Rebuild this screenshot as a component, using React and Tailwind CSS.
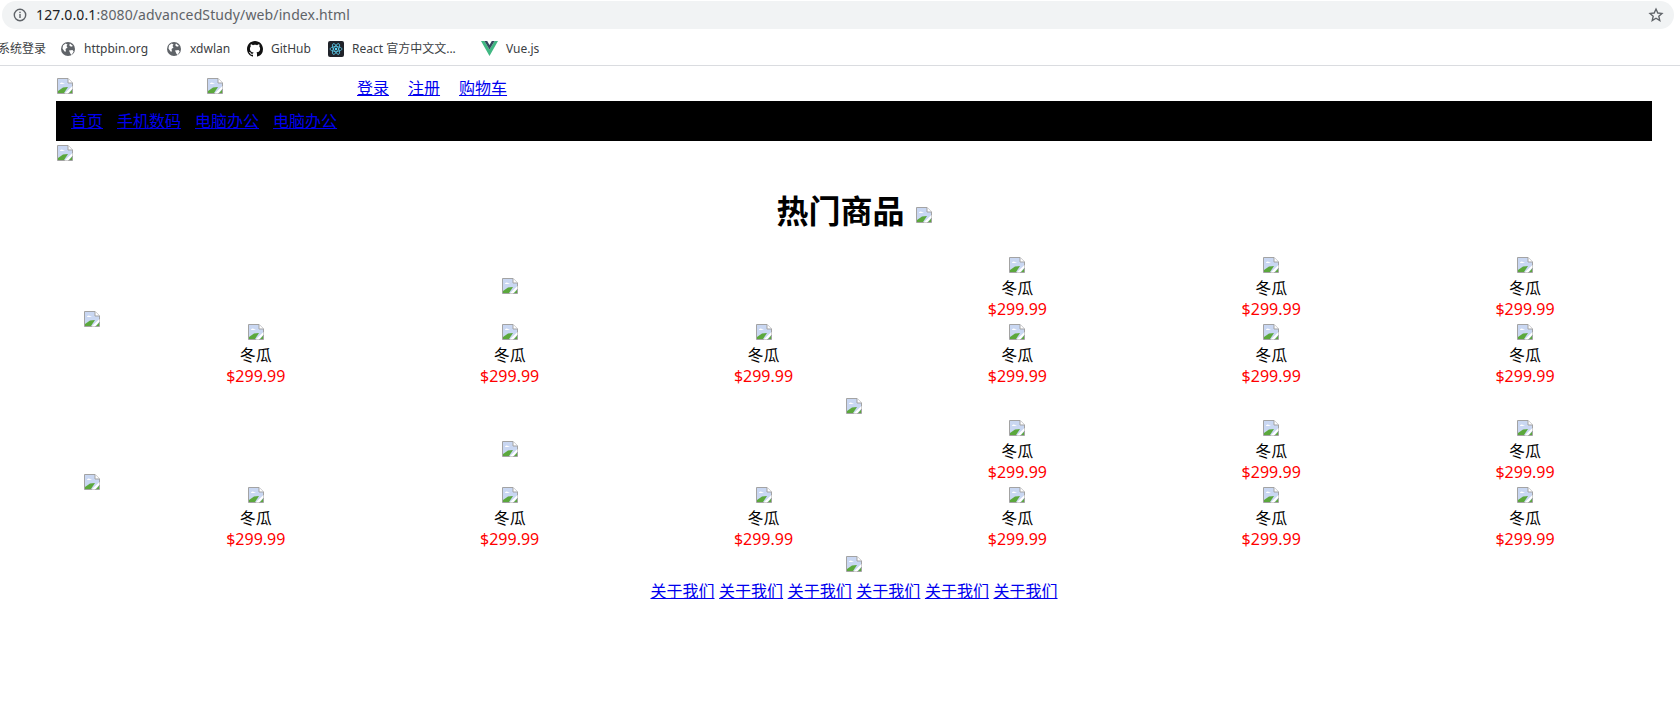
import React from "react";

const Broken = () => (
  <svg width="16" height="16" viewBox="0 0 16 16" className="block shrink-0">
    <path d="M0.5 0.5H11L15.5 5V15.5H0.5Z" fill="#c9d7f2" stroke="#a3a3a3" />
    <path d="M11 0.5V5H15.5" fill="#fff" stroke="#a3a3a3" />
    <path d="M3 5.5c1-1.2 2.4-1.2 3.2-.3.9 0 1.4.4 1.5.9H3z" fill="#fff" />
    <path d="M1 15V13L6 9.5 11 9 7 15Z" fill="#5ba83c" />
    <path d="M7.5 15.5L15.5 8V10.5L11 15.5Z" fill="#fff" />
    <path d="M12 15L15 11.7V15Z" fill="#5ba83c" />
  </svg>
);

const Globe = () => (
  <svg width="16" height="16" viewBox="0 0 16 16" className="shrink-0">
    <circle cx="8" cy="8" r="7" fill="#5f6368" />
    <path d="M3 4.5l2.5-2 2 1-1 1.5 1 1.5-2 1.5.5 2.5-1.5 0-2-3zM9 9.5l3.5-.5 1.2 1.5-2.2 3.5-1.2-1.5zM10 2.5l3 2.5-2 .8-1.8-1.5z" fill="#fff" />
  </svg>
);

const Github = () => (
  <svg width="16" height="16" viewBox="0 0 16 16" className="shrink-0" fill="#111">
    <path d="M8 0C3.58 0 0 3.58 0 8c0 3.54 2.29 6.53 5.47 7.59.4.07.55-.17.55-.38 0-.19-.01-.82-.01-1.49-2.01.37-2.53-.49-2.69-.94-.09-.23-.48-.94-.82-1.13-.28-.15-.68-.52-.01-.53.63-.01 1.08.58 1.23.82.72 1.21 1.87.87 2.33.66.07-.52.28-.87.51-1.07-1.78-.2-3.64-.89-3.64-3.95 0-.87.31-1.59.82-2.15-.08-.2-.36-1.02.08-2.12 0 0 .67-.21 2.2.82.64-.18 1.32-.27 2-.27s1.36.09 2 .27c1.53-1.04 2.2-.82 2.2-.82.44 1.1.16 1.92.08 2.12.51.56.82 1.27.82 2.15 0 3.07-1.87 3.75-3.65 3.95.29.25.54.73.54 1.48 0 1.07-.01 1.93-.01 2.2 0 .21.15.46.55.38A8.01 8.01 0 0 0 16 8c0-4.42-3.58-8-8-8z" />
  </svg>
);

const ReactIcon = () => (
  <svg width="16" height="16" viewBox="0 0 16 16" className="shrink-0">
    <rect width="16" height="16" rx="2" fill="#20232a" />
    <g fill="none" stroke="#61dafb" strokeWidth="0.7">
      <ellipse cx="8" cy="8" rx="6" ry="2.4" />
      <ellipse cx="8" cy="8" rx="6" ry="2.4" transform="rotate(60 8 8)" />
      <ellipse cx="8" cy="8" rx="6" ry="2.4" transform="rotate(120 8 8)" />
    </g>
    <circle cx="8" cy="8" r="1.2" fill="#61dafb" />
  </svg>
);

const Vue = () => (
  <svg width="17" height="15" viewBox="0 0 17 15" className="shrink-0">
    <path d="M0 0H3.4L8.5 8.6 13.6 0H17L8.5 15Z" fill="#41b883" />
    <path d="M3.4 0H6.2L8.5 4 10.8 0H13.6L8.5 8.6Z" fill="#35495e" />
  </svg>
);

const Bookmark = ({ icon, label, className }) => (
  <div className={`flex items-center ${className}`}>
    {icon}
    <span className="ml-[8px] whitespace-nowrap text-[12px] text-[#3c4043]">{label}</span>
  </div>
);

const Item = () => (
  <div className="flex flex-col items-center h-[67px]">
    <div className="h-[21px]"><Broken /></div>
    <div className="h-[21px] leading-[20px] text-black">冬瓜</div>
    <div className="h-[25px] leading-[20px] text-[#ff0000]">$299.99</div>
  </div>
);

const Hot = () => (
  <div className="flex items-start">
    <div className="w-[73px] pl-[28px] flex items-center h-[124px]">
      <Broken />
    </div>
    <div className="grid grid-cols-6 w-[1527px]">
      <div className="col-span-3 flex justify-center pt-[21px]">
        <Broken />
      </div>
      <Item /><Item /><Item />
      <Item /><Item /><Item />
      <Item /><Item /><Item />
    </div>
  </div>
);

const A = ({ children, className = "" }) => (
  <a href="#" className={`text-[#0000ee] underline ${className}`}>{children}</a>
);

export default function App() {
  return (
    <div className="bg-white w-[1680px] h-[718px] overflow-hidden text-[16px]" style={{ fontFamily: '"Noto Sans","Noto Sans CJK SC",sans-serif' }}>
      <div className="h-[66px] border-b border-[#dadce0]">
        <div className="h-[32px] pt-[1px] pl-[2px] pr-[6px]">
          <div className="h-[28px] bg-[#f1f3f4] rounded-full flex items-center pl-[11px] pr-[10px]">
            <svg width="14" height="14" viewBox="0 0 14 14" className="shrink-0">
              <circle cx="7" cy="7" r="5.7" fill="none" stroke="#5f6368" strokeWidth="1.4" />
              <rect x="6.3" y="6" width="1.4" height="4" fill="#5f6368" />
              <rect x="6.3" y="3.7" width="1.4" height="1.4" fill="#5f6368" />
            </svg>
            <div className="ml-[9px] text-[14px] leading-[20px] tracking-[0.12px] text-[#5f6368]">
              <span className="text-[#202124]">127.0.0.1</span>:8080/advancedStudy/web/index.html
            </div>
            <svg width="16" height="16" viewBox="0 0 24 24" className="ml-auto" fill="none" stroke="#5f6368" strokeWidth="2">
              <path d="M12 3l2.7 6 6.3.6-4.8 4.3 1.5 6.4L12 16.9 6.3 20.3l1.5-6.4L3 9.6 9.3 9z" />
            </svg>
          </div>
        </div>
        <div className="h-[33px] flex items-center">
          <span className="ml-[-2px] w-[62px] whitespace-nowrap text-[12px] text-[#3c4043]">系统登录</span>
          <Bookmark icon={<Globe />} label="httpbin.org" className="w-[106px]" />
          <Bookmark icon={<Globe />} label="xdwlan" className="w-[81px]" />
          <Bookmark icon={<Github />} label="GitHub" className="w-[81px]" />
          <Bookmark icon={<ReactIcon />} label="React 官方中文文..." className="w-[153px]" />
          <Bookmark icon={<Vue />} label="Vue.js" className="w-[80px]" />
        </div>
      </div>

      <div className="w-[1596px] ml-[56px]">
        <div className="h-[35px] flex pt-[12px] pl-[1px]">
          <div className="w-[150px]"><Broken /></div>
          <div className="w-[150px]"><Broken /></div>
          <div className="flex gap-[19px] leading-[24px] -mt-[2px]">
            <A>登录</A><A>注册</A><A>购物车</A>
          </div>
        </div>
        <div className="h-[40px] bg-black flex items-center pl-[15px] gap-[14px] leading-[24px]">
          <A>首页</A><A>手机数码</A><A>电脑办公</A><A>电脑办公</A>
        </div>
        <div className="pt-[4px] pl-[1px] h-[20px]"><Broken /></div>

        <div className="flex justify-center items-center gap-[11px] h-[96px] pt-[4px]">
          <h1 className="text-[32px] font-bold leading-[40px] text-black">热门商品</h1>
          <div className="pt-[8px]"><Broken /></div>
        </div>

        <Hot />
        <div className="flex justify-center pt-[7px] h-[29px]"><Broken /></div>
        <Hot />
        <div className="flex justify-center pt-[2px] h-[25px]"><Broken /></div>
        <div className="flex justify-center gap-[4.6px] leading-[24px]">
          <A>关于我们</A><A>关于我们</A><A>关于我们</A><A>关于我们</A><A>关于我们</A><A>关于我们</A>
        </div>
      </div>
    </div>
  );
}
